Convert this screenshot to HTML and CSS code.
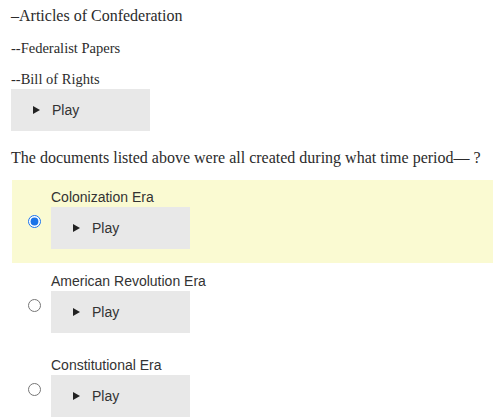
FILE: index.html
```html
<!DOCTYPE html>
<html>
<head>
<meta charset="utf-8">
<link rel="stylesheet" href="styles.css">
</head>
<body>
<div class="page">
  <p class="doc doc-first">–Articles of Confederation</p>
  <p class="doc doc-second">--Federalist Papers</p>
  <p class="doc doc-third">--Bill of Rights</p>
  <div class="play"><span class="tri"></span><span class="play-text">Play</span></div>
  <p class="question">The documents listed above were all created during what time period— ?</p>
  <div class="options">
    <label class="option selected">
      <input type="radio" name="era" checked>
      <div class="opt-body">
        <div class="opt-label">Colonization Era</div>
        <div class="play"><span class="tri"></span><span class="play-text">Play</span></div>
      </div>
    </label>
    <label class="option">
      <input type="radio" name="era">
      <div class="opt-body">
        <div class="opt-label">American Revolution Era</div>
        <div class="play"><span class="tri"></span><span class="play-text">Play</span></div>
      </div>
    </label>
    <label class="option">
      <input type="radio" name="era">
      <div class="opt-body">
        <div class="opt-label">Constitutional Era</div>
        <div class="play"><span class="tri"></span><span class="play-text">Play</span></div>
      </div>
    </label>
  </div>
</div>
</body>
</html>
```
FILE: styles.css
```css
html, body {
  margin: 0;
  padding: 0;
  background: #ffffff;
}
.page {
  padding: 6px 0 0 11px;
  font-family: "Liberation Serif", "Times New Roman", serif;
  color: #2b2b2b;
}
.doc {
  margin: 0;
  line-height: 20px;
}
.doc-first {
  font-size: 16px;
}
.doc-second {
  font-size: 14.5px;
  margin-top: 12px;
}
.doc-third {
  font-size: 14.5px;
  margin-top: 11px;
}
.play {
  width: 139px;
  height: 42px;
  background: #e8e8e8;
  display: flex;
  align-items: center;
  font-family: "Liberation Sans", Arial, sans-serif;
  font-size: 14px;
  color: #333333;
  box-sizing: border-box;
  padding-left: 22px;
}
.tri {
  width: 0;
  height: 0;
  border-top: 4px solid transparent;
  border-bottom: 4px solid transparent;
  border-left: 7px solid #222222;
  margin-right: 12px;
}
.play-text {
  line-height: 18px;
}
.question {
  margin: 17px 0 0 0;
  font-size: 16px;
  line-height: 20px;
}
.options {
  margin-top: 12px;
  margin-left: 1px;
}
.option {
  display: flex;
  align-items: flex-start;
  padding: 8px 0 14px 16px;
  margin-bottom: 1px;
}
.option.selected {
  background: #fafad2;
}
.option input {
  width: 13px;
  height: 13px;
  margin: 27px 10px 0 0;
  accent-color: #1a73e8;
}
.opt-label {
  font-family: "Liberation Sans", Arial, sans-serif;
  font-size: 14px;
  line-height: 18px;
  color: #333333;
  margin-bottom: 1px;
}
```
